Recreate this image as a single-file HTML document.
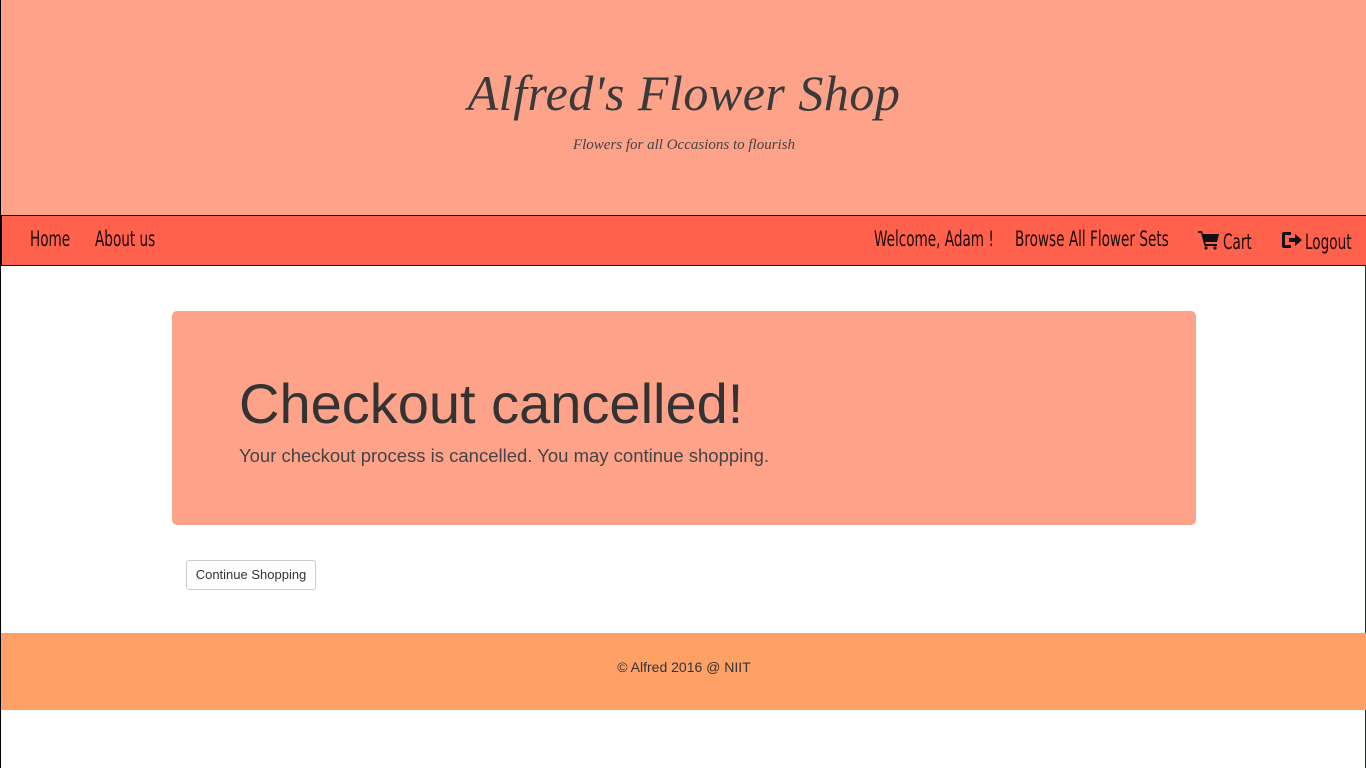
<!DOCTYPE html>
<html><head><meta charset="utf-8"><style>
*{margin:0;padding:0;box-sizing:border-box}
body{width:1366px;height:768px;background:#fff;font-family:"Liberation Sans",sans-serif;position:relative;overflow:hidden;border-left:1px solid #000;border-right:1px solid #1a3a1a}
.hdr{position:absolute;left:0;top:0;width:1366px;height:215px;background:#ffa28a}
.t1{position:absolute;left:0;width:1366px;top:64px;text-align:center;font-family:"Liberation Serif",serif;font-style:italic;font-size:50px;color:#3a3a3a;letter-spacing:0.5px}
.t2{position:absolute;left:0;width:1366px;top:137px;text-align:center;font-family:"Liberation Serif",serif;font-style:italic;font-size:15px;color:#444}
.nav{position:absolute;left:0;top:215px;width:1366px;height:51px;background:#ff614c;border:1px solid #000}
.nav span{position:absolute;top:11px;font-size:21px;color:#1a0a0a;display:inline-block;transform:scaleX(.72);transform-origin:left;white-space:nowrap;font-family:"DejaVu Sans Condensed","Liberation Sans",sans-serif}
.nav svg{position:absolute}
.jb{position:absolute;left:171px;top:311px;width:1024px;height:214px;background:#ffa28a;border-radius:5px}
.jb h1{position:absolute;left:67px;top:60px;font-size:56px;font-weight:normal;color:#333}
.jb p{position:absolute;left:67px;top:134px;font-size:18.5px;color:#444}
.btn{position:absolute;left:185px;top:560px;width:130px;height:30px;border:1px solid #ccc;border-radius:3px;font-size:13px;color:#333;text-align:center;line-height:28px;background:#fff}
.ft{position:absolute;left:0;top:633px;width:1366px;height:77px;background:#ffa066;text-align:center;font-size:14px;color:#333;line-height:68px}
</style></head><body>
<div class="hdr"><div class="t1">Alfred's Flower Shop</div><div class="t2">Flowers for all Occasions to flourish</div></div>
<div class="nav">
<span style="left:28px">Home</span>
<span style="left:93px">About us</span>
<span style="left:872px">Welcome, Adam !</span>
<span style="left:1013px">Browse All Flower Sets</span>
<svg style="left:1196px;top:14px" width="22" height="20" viewBox="0 0 22 20"><path d="M0 1h4l1 3h16l-2 8H7l1 2h11v2H6.5L3 3H0z" fill="#111"/><circle cx="8" cy="18" r="1.6" fill="#111"/><circle cx="17" cy="18" r="1.6" fill="#111"/></svg>
<span style="left:1221px;top:14px">Cart</span>
<svg style="left:1279px;top:15px" width="22" height="18" viewBox="0 0 22 18"><path d="M10 1H3Q1 1 1 3v12q0 2 2 2h7v-3H4V4h6z" fill="#111"/><path d="M8 7h6V3l7 6-7 6v-4H8z" fill="#111"/></svg>
<span style="left:1303px;top:14px">Logout</span>
</div>
<div class="jb"><h1>Checkout cancelled!</h1><p>Your checkout process is cancelled. You may continue shopping.</p></div>
<div class="btn">Continue Shopping</div>
<div class="ft">© Alfred 2016 @ NIIT</div>
</body></html>
